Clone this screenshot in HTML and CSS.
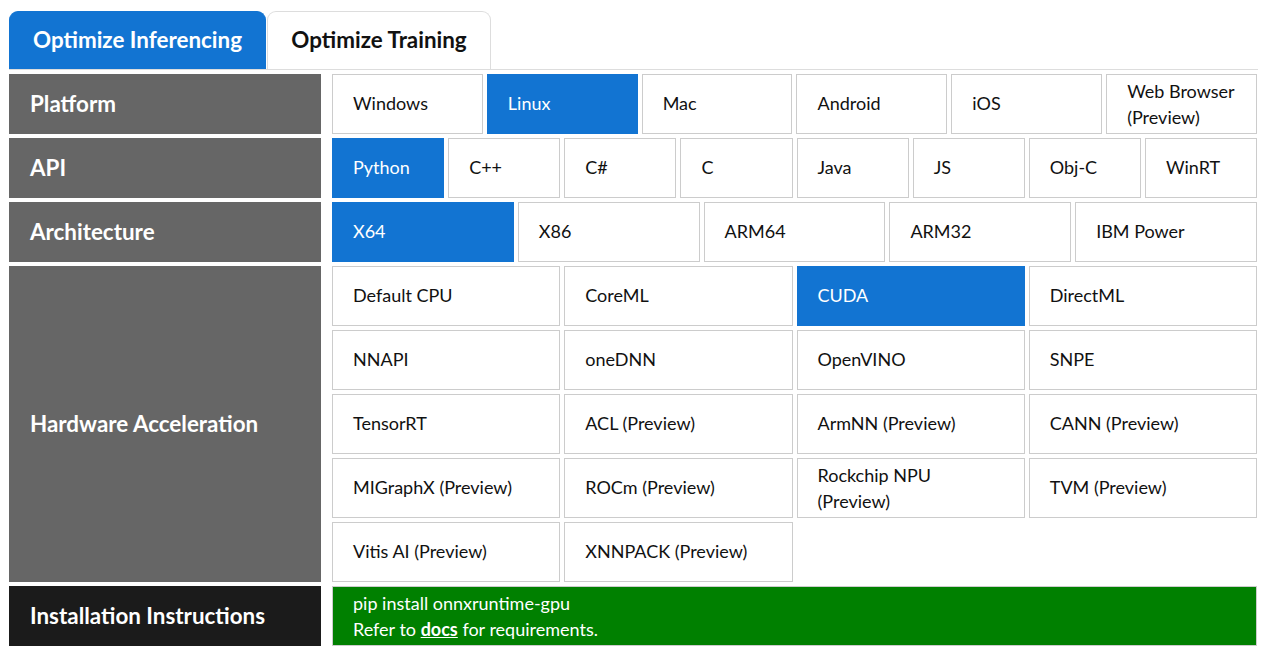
FILE: index.html
```html
<!DOCTYPE html>
<html>
<head>
<meta charset="utf-8">
<link rel="stylesheet" href="styles.css">
</head>
<body>
<div class="page">
  <div class="tabs">
    <div class="tab tab-active">Optimize Inferencing</div>
    <div class="tab tab-idle">Optimize Training</div>
  </div>
  <div class="matrix">
    <div class="label">Platform</div>
    <div class="opts cols-6">
      <div class="opt">Windows</div>
      <div class="opt sel">Linux</div>
      <div class="opt">Mac</div>
      <div class="opt">Android</div>
      <div class="opt">iOS</div>
      <div class="opt two-line">Web Browser<br>(Preview)</div>
    </div>

    <div class="label">API</div>
    <div class="opts cols-8">
      <div class="opt sel">Python</div>
      <div class="opt">C++</div>
      <div class="opt">C#</div>
      <div class="opt">C</div>
      <div class="opt">Java</div>
      <div class="opt">JS</div>
      <div class="opt">Obj-C</div>
      <div class="opt">WinRT</div>
    </div>

    <div class="label">Architecture</div>
    <div class="opts cols-5">
      <div class="opt sel">X64</div>
      <div class="opt">X86</div>
      <div class="opt">ARM64</div>
      <div class="opt">ARM32</div>
      <div class="opt">IBM Power</div>
    </div>

    <div class="label">Hardware Acceleration</div>
    <div class="opts cols-4">
      <div class="opt">Default CPU</div>
      <div class="opt">CoreML</div>
      <div class="opt sel">CUDA</div>
      <div class="opt">DirectML</div>
      <div class="opt">NNAPI</div>
      <div class="opt">oneDNN</div>
      <div class="opt">OpenVINO</div>
      <div class="opt">SNPE</div>
      <div class="opt">TensorRT</div>
      <div class="opt">ACL (Preview)</div>
      <div class="opt">ArmNN (Preview)</div>
      <div class="opt">CANN (Preview)</div>
      <div class="opt">MIGraphX (Preview)</div>
      <div class="opt">ROCm (Preview)</div>
      <div class="opt two-line">Rockchip NPU<br>(Preview)</div>
      <div class="opt">TVM (Preview)</div>
      <div class="opt">Vitis AI (Preview)</div>
      <div class="opt">XNNPACK (Preview)</div>
    </div>

    <div class="label label-dark">Installation Instructions</div>
    <div class="install">
      <div>pip install onnxruntime-gpu</div>
      <div>Refer to <a class="docs" href="#">docs</a> for requirements.</div>
    </div>
  </div>
</div>
</body>
</html>
```

FILE: styles.css
```css
html, body {
  margin: 0;
  padding: 0;
  background: #fff;
}
body {
  font-family: Lato, "Open Sans", sans-serif;
  color: #111;
}
.page {
  padding: 11px 9px 0 9px;
  width: 1249px;
}
.tabs {
  display: flex;
  border-bottom: 1px solid #ddd;
}
.tab {
  box-sizing: border-box;
  height: 58px;
  padding-bottom: 2px;
  display: flex;
  align-items: center;
  justify-content: center;
  font-size: 22.4px;
  font-weight: bold;
  color: #111;
  border: 1px solid #ddd;
  border-bottom: none;
  border-radius: 9px 9px 0 0;
  background: #fff;
}
.tab-active {
  width: 257px;
  background: #1274d2;
  border-color: #1274d2;
  color: #fff;
}
.tab-idle {
  width: 224px;
  margin-left: 1px;
}
.matrix {
  margin-top: 4px;
  display: grid;
  grid-template-columns: 312px 925px;
  column-gap: 11px;
  row-gap: 4px;
}
.label {
  background: #666;
  color: #fff;
  font-size: 22.4px;
  font-weight: bold;
  padding-left: 21px;
  padding-bottom: 2px;
  box-sizing: border-box;
  display: flex;
  align-items: center;
  min-height: 60px;
}
.label-dark {
  background: #1b1b1b;
}
.opts {
  display: grid;
  gap: 4px;
  grid-auto-rows: 60px;
}
.cols-4 { grid-template-columns: repeat(4, 1fr); }
.cols-5 { grid-template-columns: repeat(5, 1fr); }
.cols-6 { grid-template-columns: repeat(6, 1fr); }
.cols-8 { grid-template-columns: repeat(8, 1fr); }
.opt {
  border: 1px solid #ccc;
  box-sizing: border-box;
  display: flex;
  align-items: center;
  padding-left: 20px;
  padding-bottom: 2px;
  font-size: 18px;
  line-height: 26px;
  color: #111;
  background: #fff;
}
.opt.two-line {
  padding-bottom: 0;
}
.opt.sel {
  background: #1274d2;
  border-color: #1274d2;
  color: #fff;
}
.install {
  background: #008000;
  color: #fff;
  height: 60px;
  box-sizing: border-box;
  border: 1px solid #ccc;
  padding-left: 20px;
  display: flex;
  flex-direction: column;
  justify-content: center;
  font-size: 18px;
  line-height: 26px;
}
.docs {
  color: #fff;
  font-weight: bold;
  text-decoration: underline;
}
```
